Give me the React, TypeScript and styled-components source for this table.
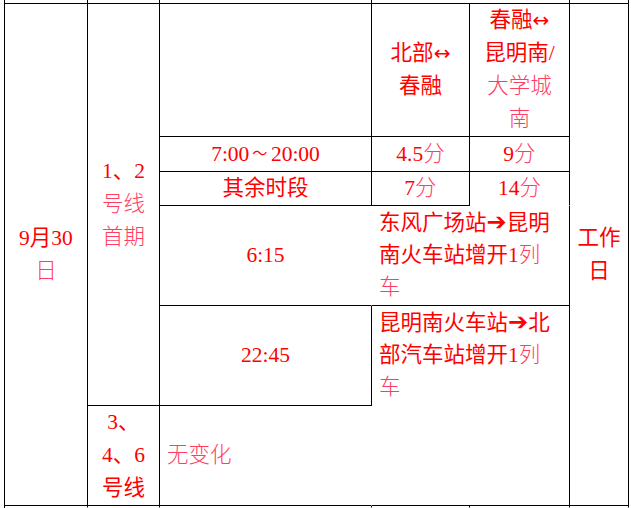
import styled, { createGlobalStyle } from "styled-components";

const GlobalStyle = createGlobalStyle`
  html, body {
    margin: 0;
    padding: 0;
    background: #fff;
    overflow: hidden;
  }
  body {
    font-family: "Liberation Serif", "Noto Sans CJK SC", serif;
    font-size: 21.5px;
    color: #ff0000;
  }
`;

const Sheet = styled.div`
  display: grid;
  grid-template-columns: 83px 72px 212px 98px 100px 59px;
  grid-template-rows: 4px 133px 35px 34px 100px 100px 100px 2px;
  width: max-content;
  margin-left: 4px;
  border-left: 1px solid #000;
`;

type Place = { $col: string; $row: string; $r?: boolean; $b?: boolean };

const Stub = styled.div<Place>`
  grid-column: ${(p) => p.$col};
  grid-row: ${(p) => p.$row};
  box-sizing: border-box;
  border-right: 1px solid #000;
  border-bottom: 1px solid ${(p) => (p.$b ? "#000" : "transparent")};
`;

const Cell = styled.div<Place & { $align?: "center" | "left" | "top"; $lh?: number }>`
  grid-column: ${(p) => p.$col};
  grid-row: ${(p) => p.$row};
  box-sizing: border-box;
  border-right: 1px solid ${(p) => (p.$r === false ? "transparent" : "#000")};
  border-bottom: 1px solid ${(p) => (p.$b === false ? "transparent" : "#000")};
  display: flex;
  flex-direction: column;
  justify-content: ${(p) => (p.$align === "top" ? "flex-start" : "center")};
  align-items: ${(p) => (p.$align === "left" || p.$align === "top" ? "flex-start" : "center")};
  padding-left: ${(p) => (p.$align === "left" || p.$align === "top" ? "7px" : "0")};
  line-height: ${(p) => p.$lh ?? 33}px;
  white-space: nowrap;
  min-width: 0;
`;

const Text = styled.div<{ $left?: boolean }>`
  text-align: ${(p) => (p.$left ? "left" : "center")};
`;

/* thin Song-style glyphs of the original document */
const Song = styled.span`
  font-weight: 300;
  color: #ff3d63;
`;

const Arrow = styled.span<{ $small?: boolean }>`
  font-family: "DejaVu Sans", sans-serif;
  font-size: ${(p) => (p.$small ? "20px" : "24px")};
  font-weight: normal;
`;

const Tilde = styled.span`
  display: inline-block;
  transform: scale(0.7, 0.75);
`;

export default function App() {
  return (
    <>
      <GlobalStyle />
      <Sheet>
        <Stub $col="1" $row="1" $b />
        <Stub $col="2" $row="1" $b />
        <Stub $col="3" $row="1" $b />
        <Stub $col="4 / 6" $row="1" $b />
        <Stub $col="6" $row="1" $b />

        <Cell $col="1" $row="2 / 8">
          <Text>
            9月30
            <br />
            <Song>日</Song>
          </Text>
        </Cell>
        <Cell $col="2" $row="2 / 7">
          <Text>
            1、2
            <br />
            <Song>号线</Song>
            <br />
            <Song>首期</Song>
          </Text>
        </Cell>
        <Cell $col="3" $row="2" />
        <Cell $col="4" $row="2">
          <Text>
            北部<Arrow $small>↔</Arrow>
            <br />
            春融
          </Text>
        </Cell>
        <Cell $col="5" $row="2">
          <Text>
            春融<Arrow $small>↔</Arrow>
            <br />
            昆明南/
            <br />
            <Song>大学城</Song>
            <br />
            <Song>南</Song>
          </Text>
        </Cell>
        <Cell $col="6" $row="2 / 8">
          <Text>
            工作
            <br />
            日
          </Text>
        </Cell>

        <Cell $col="3" $row="3">
          <Text>
            7:00<Tilde>～</Tilde>20:00
          </Text>
        </Cell>
        <Cell $col="4" $row="3">
          <Text>
            4.5<Song>分</Song>
          </Text>
        </Cell>
        <Cell $col="5" $row="3">
          <Text>
            9<Song>分</Song>
          </Text>
        </Cell>

        <Cell $col="3" $row="4">其余时段</Cell>
        <Cell $col="4" $row="4">
          <Text>
            7<Song>分</Song>
          </Text>
        </Cell>
        <Cell $col="5" $row="4" $b={false}>
          <Text>
            14<Song>分</Song>
          </Text>
        </Cell>

        <Cell $col="3" $row="5" $r={false}>6:15</Cell>
        <Cell $col="4 / 6" $row="5" $align="top" $lh={32}>
          <Text $left>
            东风广场站<Arrow>➔</Arrow>昆明
            <br />
            南火车站增开1<Song>列</Song>
            <br />
            <Song>车</Song>
          </Text>
        </Cell>

        <Cell $col="3" $row="6">22:45</Cell>
        <Cell $col="4 / 6" $row="6 / 8" $align="top" $lh={32}>
          <Text $left>
            昆明南火车站<Arrow>➔</Arrow>北
            <br />
            部汽车站增开1<Song>列</Song>
            <br />
            <Song>车</Song>
          </Text>
        </Cell>

        <Cell $col="2" $row="7">
          <Text>
            3、
            <br />
            4、6
            <br />
            号线
          </Text>
        </Cell>
        <Cell $col="3" $row="7" $r={false} $align="left">
          <Song>无变化</Song>
        </Cell>

        <Stub $col="1" $row="8" />
        <Stub $col="2" $row="8" />
        <Stub $col="3" $row="8" />
        <Stub $col="4" $row="8" />
        <Stub $col="5" $row="8" />
        <Stub $col="6" $row="8" />
      </Sheet>
    </>
  );
}
